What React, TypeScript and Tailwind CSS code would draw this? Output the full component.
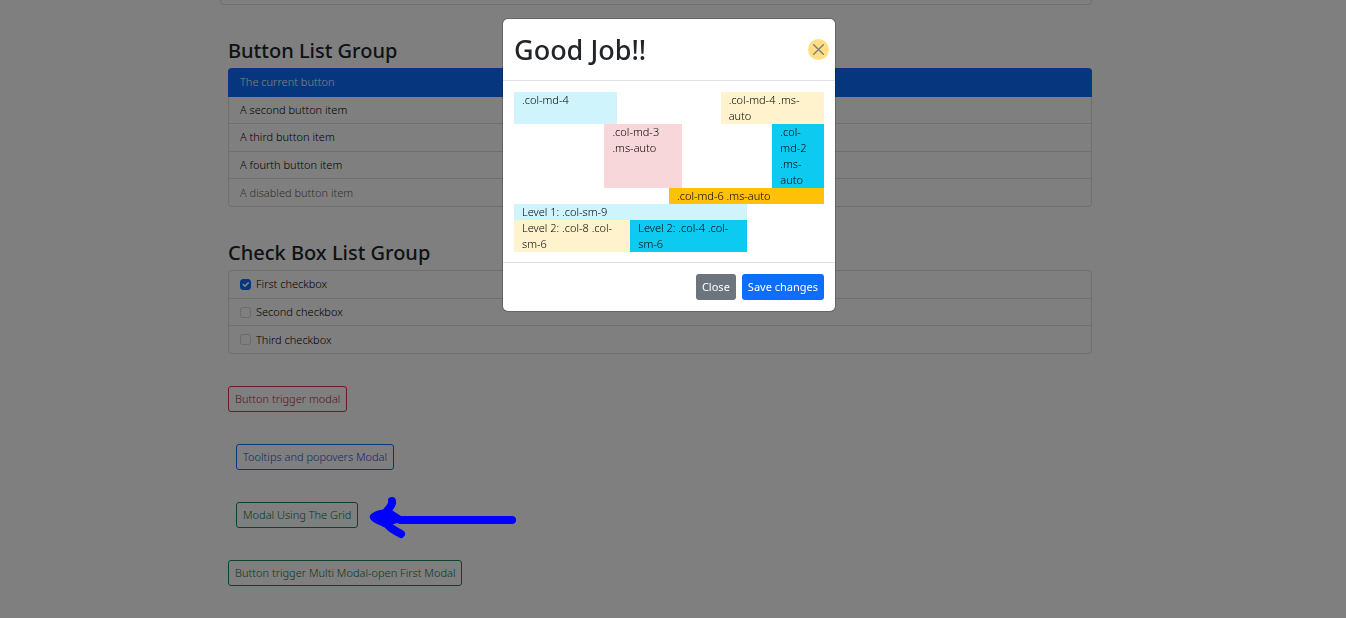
import type { ReactNode } from "react";

const buttonItems = [
  { text: "The current button", active: true },
  { text: "A second button item" },
  { text: "A third button item" },
  { text: "A fourth button item" },
  { text: "A disabled button item", disabled: true },
];

const checkItems = [
  { id: "check-first", text: "First checkbox", checked: true },
  { id: "check-second", text: "Second checkbox", checked: false },
  { id: "check-third", text: "Third checkbox", checked: false },
];

function SectionTitle({ children }: { children: ReactNode }) {
  return <h2 className="mb-1 pt-px text-[20px] leading-[26px] font-medium text-[#212529]">{children}</h2>;
}

const outline = "h-[26px] rounded-[3px] border px-[6px] leading-4";

function ButtonList() {
  return (
    <section>
      <SectionTitle>Button List Group</SectionTitle>
      <div className="flex min-h-[139px] flex-col divide-y divide-black/[.125] rounded border border-black/[.125]">
        {buttonItems.map((item) => (
          <button
            key={item.text}
            type="button"
            disabled={item.disabled}
            className={
              item.active
                ? "-mx-px -mt-px flex-1 rounded-t border-[#0d6efd] bg-[#0d6efd] px-3 pt-px text-left leading-4 text-white"
                : item.disabled
                  ? "flex-1 px-[11px] text-left leading-4 text-[#5c636a]"
                  : "flex-1 px-[11px] text-left leading-4"
            }
          >
            {item.text}
          </button>
        ))}
      </div>
    </section>
  );
}

function CheckList() {
  return (
    <section>
      <SectionTitle>Check Box List Group</SectionTitle>
      <ul className="flex min-h-[84px] flex-col divide-y divide-black/[.125] rounded border border-black/[.125]">
        {checkItems.map((item) => (
          <li key={item.id} className="flex flex-1 items-center gap-[5px] px-[11px]">
            <span className="grid">
              <input
                id={item.id}
                type="checkbox"
                defaultChecked={item.checked}
                className="peer col-start-1 row-start-1 size-[11px] appearance-none rounded-[3px] border border-black/15 bg-white checked:border-[#0d6efd] checked:bg-[#0d6efd]"
              />
              <svg
                viewBox="0 0 20 20"
                className="pointer-events-none col-start-1 row-start-1 hidden size-[11px] peer-checked:block"
                fill="none"
                stroke="#fff"
                strokeWidth="3"
                strokeLinecap="round"
                strokeLinejoin="round"
              >
                <path d="M6 10l3 3 6-6" />
              </svg>
            </span>
            <label htmlFor={item.id} className="leading-4">
              {item.text}
            </label>
          </li>
        ))}
      </ul>
    </section>
  );
}

function Arrow() {
  return (
    <svg
      viewBox="0 0 150 48"
      className="pointer-events-none absolute top-1/2 left-full z-20 ml-[10px] h-[48px] w-[150px] -translate-y-1/2"
      fill="none"
      stroke="#0000ff"
      strokeWidth="8"
      strokeLinecap="round"
      strokeLinejoin="round"
    >
      <path d="M24 10C25 14 22 16 19 20" />
      <path d="M6 26C10 22 16 23 21 22L32 29H144" />
      <path d="M6 26C9 30 15 30 20 34C24 39 28 40 33 43" />
      <path d="M9 26L20 22L32 29L22 32Z" fill="#0000ff" strokeWidth="4" />
    </svg>
  );
}

function Modal() {
  return (
    <div className="fixed inset-0 z-10 bg-black/50 pt-[19px] pr-4 pl-2">
      <div
        role="dialog"
        aria-modal="true"
        aria-labelledby="modal-title"
        className="mx-auto w-full max-w-[332px] rounded-[5px] bg-white ring-1 ring-black/20"
      >
        <header className="flex items-center justify-between border-b border-[#dee2e6] py-[11px] pr-[6px] pl-[11px]">
          <h1 id="modal-title" className="text-[27px] leading-[39px] font-medium text-[#212529]">
            Good Job!!
          </h1>
          <button
            type="button"
            aria-label="Close"
            className="grid size-[21px] place-items-center rounded-full bg-[#ffc107] opacity-50"
          >
            <svg viewBox="0 0 16 16" className="size-[11px]" stroke="#000" strokeWidth="2" strokeLinecap="round">
              <path d="M1 1l14 14M15 1L1 15" />
            </svg>
          </button>
        </header>
        <div className="px-[11px] pt-[11px] pb-[10px] leading-4">
          <div className="flex">
            <div className="w-1/3 bg-[#cff4fc] px-2">.col-md-4</div>
            <div className="ml-auto w-1/3 bg-[#fff3cd] px-2">.col-md-4 .ms-auto</div>
          </div>
          <div className="flex">
            <div className="ml-auto w-1/4 bg-[#f8d7da] px-2">.col-md-3 .ms-auto</div>
            <div className="ml-auto w-1/6 bg-[#0dcaf0] px-2">.col-md-2 .ms-auto</div>
          </div>
          <div className="flex">
            <div className="ml-auto w-1/2 bg-[#ffc107] px-2">.col-md-6 .ms-auto</div>
          </div>
          <div className="w-3/4 bg-[#cff4fc]">
            <div className="px-2">Level 1: .col-sm-9</div>
            <div className="flex">
              <div className="w-1/2 bg-[#fff3cd] px-2">Level 2: .col-8 .col-sm-6</div>
              <div className="w-1/2 bg-[#0dcaf0] px-2">Level 2: .col-4 .col-sm-6</div>
            </div>
          </div>
        </div>
        <footer className="flex justify-end gap-[6px] border-t border-[#dee2e6] p-[11px] font-normal text-white">
          <button type="button" className="h-[26px] rounded-[3px] bg-[#6c757d] px-[6px] leading-4">
            Close
          </button>
          <button type="button" className="h-[26px] rounded-[3px] bg-[#0d6efd] px-[6px] leading-4">
            Save changes
          </button>
        </footer>
      </div>
    </div>
  );
}

export default function App() {
  return (
    <div className="min-h-screen bg-white pr-[26px] font-['Noto_Sans','Open_Sans',sans-serif] text-[11px] font-light text-black">
      <main className="mx-auto max-w-[880px]">
        <div className="mr-2 h-[5px] rounded-b border border-t-0 border-black/[.125]" />
        <div className="flex flex-col gap-8 px-2 py-8">
          <ButtonList />
          <CheckList />
          <div>
            <button type="button" className={`${outline} border-[#dc3545] text-[#b32d3a]`}>
              Button trigger modal
            </button>
          </div>
          <div className="pl-2">
            <button type="button" className={`${outline} border-[#0d6efd] text-[#1a4fd0]`}>
              Tooltips and popovers Modal
            </button>
          </div>
          <div className="flex pl-2">
            <div className="relative">
              <button type="button" className={`${outline} border-[#198754] text-[#146c43]`}>
                Modal Using The Grid
              </button>
              <Arrow />
            </div>
          </div>
          <div>
            <button type="button" className={`${outline} border-[#198754] text-[#146c43]`}>
              Button trigger Multi Modal-open First Modal
            </button>
          </div>
        </div>
      </main>
      <Modal />
    </div>
  );
}
